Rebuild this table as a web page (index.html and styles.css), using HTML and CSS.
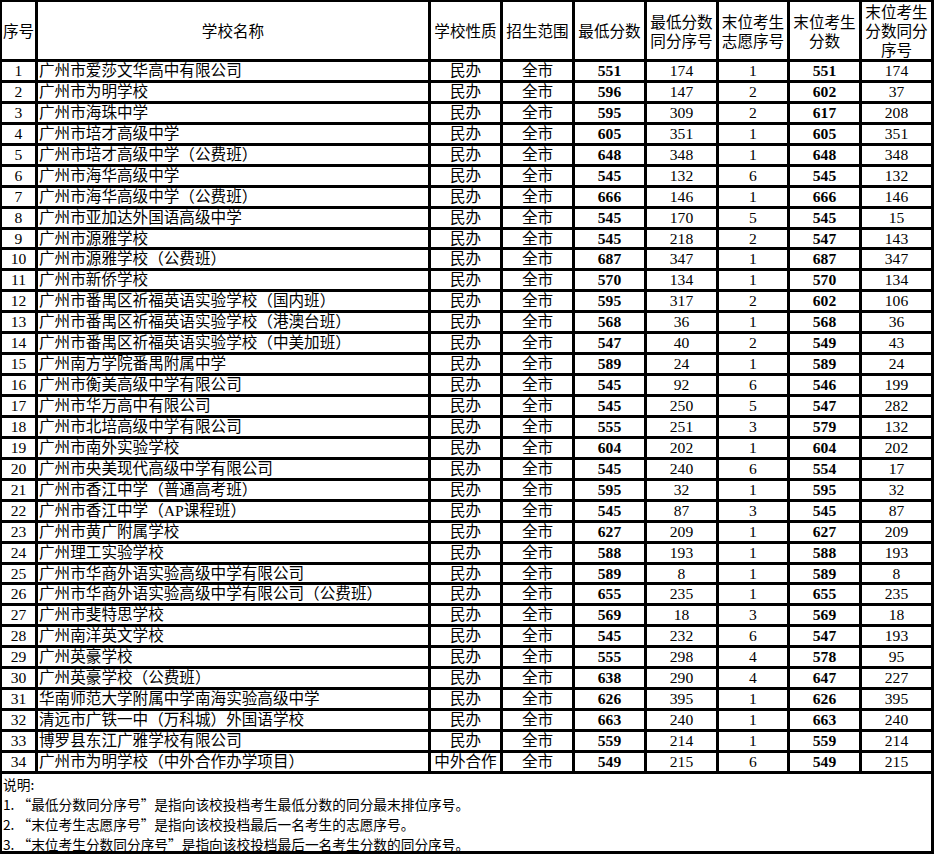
FILE: index.html
```html
<!DOCTYPE html>
<html lang="zh-CN">
<head>
<meta charset="utf-8">
<title>投档情况</title>
<link rel="stylesheet" href="styles.css">
</head>
<body>
<div class="sheet">
  <div class="grid">
    <div class="h">序号</div>
    <div class="h">学校名称</div>
    <div class="h">学校性质</div>
    <div class="h">招生范围</div>
    <div class="h">最低分数</div>
    <div class="h">最低分数<br>同分序号</div>
    <div class="h">末位考生<br>志愿序号</div>
    <div class="h">末位考生<br>分数</div>
    <div class="h h3">末位考生<br>分数同分<br>序号</div>

    <div class="c">1</div><div class="n">广州市爱莎文华高中有限公司</div><div class="c">民办</div><div class="c">全市</div><div class="c b">551</div><div class="c">174</div><div class="c">1</div><div class="c b">551</div><div class="c">174</div>
    <div class="c">2</div><div class="n">广州市为明学校</div><div class="c">民办</div><div class="c">全市</div><div class="c b">596</div><div class="c">147</div><div class="c">2</div><div class="c b">602</div><div class="c">37</div>
    <div class="c">3</div><div class="n">广州市海珠中学</div><div class="c">民办</div><div class="c">全市</div><div class="c b">595</div><div class="c">309</div><div class="c">2</div><div class="c b">617</div><div class="c">208</div>
    <div class="c">4</div><div class="n">广州市培才高级中学</div><div class="c">民办</div><div class="c">全市</div><div class="c b">605</div><div class="c">351</div><div class="c">1</div><div class="c b">605</div><div class="c">351</div>
    <div class="c">5</div><div class="n">广州市培才高级中学（公费班）</div><div class="c">民办</div><div class="c">全市</div><div class="c b">648</div><div class="c">348</div><div class="c">1</div><div class="c b">648</div><div class="c">348</div>
    <div class="c">6</div><div class="n">广州市海华高级中学</div><div class="c">民办</div><div class="c">全市</div><div class="c b">545</div><div class="c">132</div><div class="c">6</div><div class="c b">545</div><div class="c">132</div>
    <div class="c">7</div><div class="n">广州市海华高级中学（公费班）</div><div class="c">民办</div><div class="c">全市</div><div class="c b">666</div><div class="c">146</div><div class="c">1</div><div class="c b">666</div><div class="c">146</div>
    <div class="c">8</div><div class="n">广州市亚加达外国语高级中学</div><div class="c">民办</div><div class="c">全市</div><div class="c b">545</div><div class="c">170</div><div class="c">5</div><div class="c b">545</div><div class="c">15</div>
    <div class="c">9</div><div class="n">广州市源雅学校</div><div class="c">民办</div><div class="c">全市</div><div class="c b">545</div><div class="c">218</div><div class="c">2</div><div class="c b">547</div><div class="c">143</div>
    <div class="c">10</div><div class="n">广州市源雅学校（公费班）</div><div class="c">民办</div><div class="c">全市</div><div class="c b">687</div><div class="c">347</div><div class="c">1</div><div class="c b">687</div><div class="c">347</div>
    <div class="c">11</div><div class="n">广州市新侨学校</div><div class="c">民办</div><div class="c">全市</div><div class="c b">570</div><div class="c">134</div><div class="c">1</div><div class="c b">570</div><div class="c">134</div>
    <div class="c">12</div><div class="n">广州市番禺区祈福英语实验学校（国内班）</div><div class="c">民办</div><div class="c">全市</div><div class="c b">595</div><div class="c">317</div><div class="c">2</div><div class="c b">602</div><div class="c">106</div>
    <div class="c">13</div><div class="n">广州市番禺区祈福英语实验学校（港澳台班）</div><div class="c">民办</div><div class="c">全市</div><div class="c b">568</div><div class="c">36</div><div class="c">1</div><div class="c b">568</div><div class="c">36</div>
    <div class="c">14</div><div class="n">广州市番禺区祈福英语实验学校（中美加班）</div><div class="c">民办</div><div class="c">全市</div><div class="c b">547</div><div class="c">40</div><div class="c">2</div><div class="c b">549</div><div class="c">43</div>
    <div class="c">15</div><div class="n">广州南方学院番禺附属中学</div><div class="c">民办</div><div class="c">全市</div><div class="c b">589</div><div class="c">24</div><div class="c">1</div><div class="c b">589</div><div class="c">24</div>
    <div class="c">16</div><div class="n">广州市衡美高级中学有限公司</div><div class="c">民办</div><div class="c">全市</div><div class="c b">545</div><div class="c">92</div><div class="c">6</div><div class="c b">546</div><div class="c">199</div>
    <div class="c">17</div><div class="n">广州市华万高中有限公司</div><div class="c">民办</div><div class="c">全市</div><div class="c b">545</div><div class="c">250</div><div class="c">5</div><div class="c b">547</div><div class="c">282</div>
    <div class="c">18</div><div class="n">广州市北培高级中学有限公司</div><div class="c">民办</div><div class="c">全市</div><div class="c b">555</div><div class="c">251</div><div class="c">3</div><div class="c b">579</div><div class="c">132</div>
    <div class="c">19</div><div class="n">广州市南外实验学校</div><div class="c">民办</div><div class="c">全市</div><div class="c b">604</div><div class="c">202</div><div class="c">1</div><div class="c b">604</div><div class="c">202</div>
    <div class="c">20</div><div class="n">广州市央美现代高级中学有限公司</div><div class="c">民办</div><div class="c">全市</div><div class="c b">545</div><div class="c">240</div><div class="c">6</div><div class="c b">554</div><div class="c">17</div>
    <div class="c">21</div><div class="n">广州市香江中学（普通高考班）</div><div class="c">民办</div><div class="c">全市</div><div class="c b">595</div><div class="c">32</div><div class="c">1</div><div class="c b">595</div><div class="c">32</div>
    <div class="c">22</div><div class="n">广州市香江中学（AP课程班）</div><div class="c">民办</div><div class="c">全市</div><div class="c b">545</div><div class="c">87</div><div class="c">3</div><div class="c b">545</div><div class="c">87</div>
    <div class="c">23</div><div class="n">广州市黄广附属学校</div><div class="c">民办</div><div class="c">全市</div><div class="c b">627</div><div class="c">209</div><div class="c">1</div><div class="c b">627</div><div class="c">209</div>
    <div class="c">24</div><div class="n">广州理工实验学校</div><div class="c">民办</div><div class="c">全市</div><div class="c b">588</div><div class="c">193</div><div class="c">1</div><div class="c b">588</div><div class="c">193</div>
    <div class="c">25</div><div class="n">广州市华商外语实验高级中学有限公司</div><div class="c">民办</div><div class="c">全市</div><div class="c b">589</div><div class="c">8</div><div class="c">1</div><div class="c b">589</div><div class="c">8</div>
    <div class="c">26</div><div class="n">广州市华商外语实验高级中学有限公司（公费班）</div><div class="c">民办</div><div class="c">全市</div><div class="c b">655</div><div class="c">235</div><div class="c">1</div><div class="c b">655</div><div class="c">235</div>
    <div class="c">27</div><div class="n">广州市斐特思学校</div><div class="c">民办</div><div class="c">全市</div><div class="c b">569</div><div class="c">18</div><div class="c">3</div><div class="c b">569</div><div class="c">18</div>
    <div class="c">28</div><div class="n">广州南洋英文学校</div><div class="c">民办</div><div class="c">全市</div><div class="c b">545</div><div class="c">232</div><div class="c">6</div><div class="c b">547</div><div class="c">193</div>
    <div class="c">29</div><div class="n">广州英豪学校</div><div class="c">民办</div><div class="c">全市</div><div class="c b">555</div><div class="c">298</div><div class="c">4</div><div class="c b">578</div><div class="c">95</div>
    <div class="c">30</div><div class="n">广州英豪学校（公费班）</div><div class="c">民办</div><div class="c">全市</div><div class="c b">638</div><div class="c">290</div><div class="c">4</div><div class="c b">647</div><div class="c">227</div>
    <div class="c">31</div><div class="n">华南师范大学附属中学南海实验高级中学</div><div class="c">民办</div><div class="c">全市</div><div class="c b">626</div><div class="c">395</div><div class="c">1</div><div class="c b">626</div><div class="c">395</div>
    <div class="c">32</div><div class="n">清远市广铁一中（万科城）外国语学校</div><div class="c">民办</div><div class="c">全市</div><div class="c b">663</div><div class="c">240</div><div class="c">1</div><div class="c b">663</div><div class="c">240</div>
    <div class="c">33</div><div class="n">博罗县东江广雅学校有限公司</div><div class="c">民办</div><div class="c">全市</div><div class="c b">559</div><div class="c">214</div><div class="c">1</div><div class="c b">559</div><div class="c">214</div>
    <div class="c">34</div><div class="n">广州市为明学校（中外合作办学项目）</div><div class="c">中外合作</div><div class="c">全市</div><div class="c b">549</div><div class="c">215</div><div class="c">6</div><div class="c b">549</div><div class="c">215</div>
  </div>
  <div class="notes">
    <div>说明:</div>
    <div>1. “最低分数同分序号”是指向该校投档考生最低分数的同分最末排位序号。</div>
    <div>2. “末位考生志愿序号”是指向该校投档最后一名考生的志愿序号。</div>
    <div>3. “末位考生分数同分序号”是指向该校投档最后一名考生分数的同分序号。</div>
  </div>
</div>
</body>
</html>
```

FILE: styles.css
```css
html, body {
  margin: 0;
  padding: 0;
  background: #ffffff;
}

body {
  font-family: "Liberation Serif", "Noto Sans CJK SC", serif;
  color: #000000;
  font-size: 15.6px;
}

.sheet {
  width: 934px;
}

.grid {
  display: grid;
  grid-template-columns: 33px 390px 69px 69px 69px 69px 68px 69px 69px;
  grid-template-rows: 57px;
  grid-auto-rows: 17.94px;
  gap: 3px;
  padding: 2px 3px 3px 2px;
  background: #000000;
}

.grid > div {
  background: #ffffff;
  white-space: nowrap;
  overflow: hidden;
}

.h {
  display: flex;
  align-items: center;
  justify-content: center;
  text-align: center;
  line-height: 19px;
  font-family: "Noto Sans CJK SC", sans-serif;
}

.h3 {
  line-height: 18.8px;
}

.c {
  text-align: center;
  line-height: 17.94px;
}

.n {
  padding-left: 1px;
  line-height: 17.94px;
}

.b {
  font-weight: bold;
}

.notes {
  height: 77px;
  border: 3px solid #000000;
  border-top: none;
  border-left-width: 2px;
  padding-left: 1px;
  font-family: "Noto Sans CJK SC", sans-serif;
  font-size: 13.7px;
  line-height: 20px;
}
```
